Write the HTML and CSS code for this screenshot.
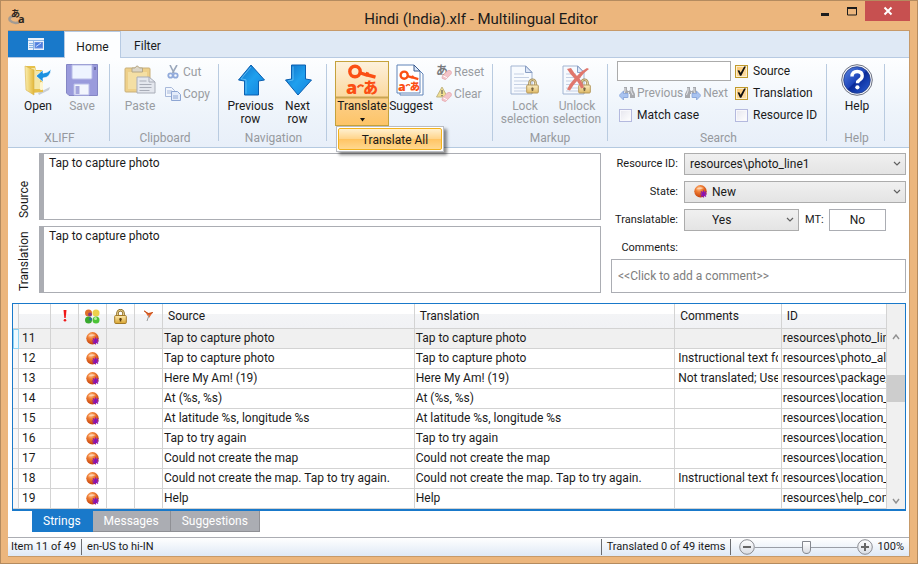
FILE: index.html
```html
<!DOCTYPE html>
<html lang="en">
<head>
<meta charset="utf-8">
<title>Hindi (India).xlf - Multilingual Editor</title>
<link rel="stylesheet" href="styles.css">
</head>
<body>
<svg class="defs" aria-hidden="true">
  <defs>
    <radialGradient id="ballFill" cx="38%" cy="28%" r="70%"><stop offset="0" stop-color="#ffc08a"/><stop offset=".4" stop-color="#ef7d33"/><stop offset="1" stop-color="#c5430c"/></radialGradient>
    <linearGradient id="arrowFill" x1="0" y1="0" x2="1" y2="1"><stop offset="0" stop-color="#0d6fc6"/><stop offset=".5" stop-color="#1fa0ee"/><stop offset="1" stop-color="#1583dc"/></linearGradient>
    <linearGradient id="folderFill" x1="0" y1="0" x2="1" y2="0"><stop offset="0" stop-color="#fbefb0"/><stop offset="1" stop-color="#e3b83a"/></linearGradient>
    <linearGradient id="lockFill" x1="0" y1="0" x2="0" y2="1"><stop offset="0" stop-color="#fdeab0"/><stop offset="1" stop-color="#d9a531"/></linearGradient>
    <linearGradient id="helpFill" x1="0" y1="0" x2="1" y2="1"><stop offset="0" stop-color="#5b86e0"/><stop offset=".48" stop-color="#1d45bb"/><stop offset=".52" stop-color="#0a2a98"/><stop offset="1" stop-color="#2b62d8"/></linearGradient>
    <linearGradient id="zoomFill" x1="0" y1="0" x2="0" y2="1"><stop offset="0" stop-color="#fff"/><stop offset="1" stop-color="#d9dde4"/></linearGradient>
    <symbol id="ball" viewBox="0 0 14 14">
      <circle cx="6.5" cy="6.3" r="6.2" fill="url(#ballFill)"/>
      <path d="M2 4.2Q5 1 10 3Q7 4.500 2 4.200Z" fill="#ffe0c4" opacity=".7"/>
      <path d="M9.500 5.500v7M6 9h7M7 6.500l5 5M12 6.500l-5 5" stroke="#8a12b4" stroke-width="1.200"/>
    </symbol>
    <symbol id="chevron" viewBox="0 0 8 6"><path d="M1 1l3 3 3-3" fill="none" stroke="#606060" stroke-width="1.200"/></symbol>
    <symbol id="padlock" viewBox="0 0 13 15">
      <path d="M3.500 7V4.200a3 3 0 0 1 6 0V7" fill="none" stroke="#8a6a22" stroke-width="2.600"/>
      <path d="M3.500 7V4.200a3 3 0 0 1 6 0V7" fill="none" stroke="#e9d18d" stroke-width="1"/>
      <rect x=".7" y="6.500" width="11.600" height="8" rx="1" fill="url(#lockFill)" stroke="#a27a28"/>
      <path d="M6.500 9v3.500M5.300 10.300h2.400" stroke="#5d3e0c" stroke-width="1.500"/>
    </symbol>
    <symbol id="page" viewBox="0 0 24 30">
      <path d="M1 1h15l6 6v22H1z" fill="#f7faff" stroke="#8ea4c8"/>
      <path d="M15.500 1v6.500H22z" fill="#d5e2f8" stroke="#6f88b5"/>
      <path d="M4 9h10M4 12.500h15M4 16h15M4 19.500h15M4 23h12M4 26h12" stroke="#b9c6de"/>
    </symbol>
    <symbol id="translateMark" viewBox="0 0 32 32">
      <circle cx="9" cy="7.500" r="5.200" fill="none" stroke="#fb4f14" stroke-width="3.400"/>
      <path d="M13 8.500l8 2.600M20 10.500l9.500 2.700" fill="none" stroke="#fb4f14" stroke-width="3.400"/>
      <path d="M20.500 12l1.200-3.800" fill="none" stroke="#fb4f14" stroke-width="3"/>
      <text x="0" y="30" font-size="18" font-weight="800" fill="#fb4f14">a</text>
      <path d="M11.500 23.500q3-4 6-1" fill="none" stroke="#fb4f14" stroke-width="2"/>
      <text x="17" y="29" font-size="15" font-weight="900" fill="#fb4f14">あ</text>
    </symbol>
    <symbol id="binoculars" viewBox="0 0 13 12">
      <path d="M2 1h3v3l1 1h1l1-1V1h3v3l2 4v4H8V8H5v4H0V8l2-4z" fill="#a7a9ae"/>
      <path d="M3 2v3L1.500 9M9 2v3l2 4M6.500 6v2" stroke="#e6e7ea" fill="none"/>
    </symbol>
    <symbol id="heart" viewBox="0 0 12 11"><path d="M1.500 6.500L6.800 1.200a2.500 2.500 0 0 1 4 3.500L4.800 10.700 1 9z" fill="#f3c4c9" stroke="#e2a0a8" stroke-width=".7"/><path d="M2.500 6.500l4 2" stroke="#fff"/></symbol>
  </defs>
</svg>

<div class="window">
  <header class="titlebar">
    <svg class="app-icon" width="18" height="18" viewBox="0 0 18 18" aria-hidden="true">
      <path d="M6 8Q0 9 2 12.500q3 3.500 9 2" fill="none" stroke="#a39b93" stroke-width="2.600"/>
      <text x="3" y="9" font-size="9" font-weight="700" fill="#2c2520">あ</text>
      <text x="10" y="15" font-size="11" font-weight="700" fill="#2c2520">a</text>
    </svg>
    <h1 class="title">Hindi (India).xlf - Multilingual Editor</h1>
    <div class="window-buttons">
      <button class="win-btn" aria-label="Minimize"><svg width="10" height="10"><path d="M1 8.500h8" stroke="#1d1d1d" stroke-width="3"/></svg></button>
      <button class="win-btn" aria-label="Maximize"><svg width="10" height="10"><path d="M.5 2v7h9V2z" fill="none" stroke="#1d1d1d"/><path d="M0 2h10" stroke="#1d1d1d" stroke-width="2"/></svg></button>
      <button class="win-btn close" aria-label="Close"><svg width="10" height="10"><path d="M1.500 1.500l7 7M8.500 1.500l-7 7" stroke="#fff" stroke-width="2"/></svg></button>
    </div>
  </header>

  <div class="client">
    <nav class="tabs">
      <button class="file-tab" aria-label="File menu">
        <svg width="16" height="12" viewBox="0 0 16 12"><rect width="16" height="12" fill="#e9f1fc"/><path d="M0 2.500h16M1 5.500h4M1 7.500h4M1 9.500h4M5.500 3v9" stroke="#8db5e4"/><rect x="7" y="4.500" width="7.500" height="5.500" fill="#4f7fe0" stroke="#6f93e0"/><path d="M8 8.500L13 5" stroke="#cfe0ff"/></svg>
      </button>
      <button class="tab active">Home</button>
      <button class="tab">Filter</button>
    </nav>

    <div class="ribbon">
      <section class="group g-xliff">
        <div class="items">
          <button class="big">
            <svg width="32" height="32" viewBox="0 0 32 32"><path d="M16 29l12-6-1 3-10 5z" fill="#aeb4bc" opacity=".6"/><path d="M4 2h9l1 4h7v22l-12 1z" fill="#e6c04a"/><path d="M9 4h4l1 3h4v18H9z" fill="#f4e6a4"/><path d="M3 2l9 4v25l-8-5z" fill="url(#folderFill)" stroke="#d7b24b" stroke-width=".6"/><rect x="18" y="18" width="3" height="8" rx="1" fill="#fff6cf"/><path d="M14 12l7-6v3.200q5-.2 8-4.200-.5 8.500-8 9v4z" fill="#1b91e0" stroke="#fff" stroke-width=".6"/></svg>
            <span>Open</span>
          </button>
          <button class="big" disabled>
            <svg width="32" height="32" viewBox="0 0 32 32"><path d="M1 .5h30.500v31H3L.5 29V.5z" fill="#9a9bdc" stroke="#8486c4"/><path d="M6 1h20v13q0 1-1 1H7q-1 0-1-1z" fill="#eef4ff" stroke="#b8bce8"/><path d="M8 31V20h15v11z" fill="#f3f6fd" stroke="#b8bce8"/><rect x="9.500" y="22" width="4" height="8" fill="#a4a5dc"/><rect x="28" y="3" width="2" height="3" fill="#6c6ea8"/></svg>
            <span>Save</span>
          </button>
        </div>
        <h2>XLIFF</h2>
      </section>

      <section class="group g-clipboard">
        <div class="items">
          <button class="big" disabled>
            <svg width="32" height="32" viewBox="0 0 32 32"><rect x="1" y="4" width="25" height="24" rx="1" fill="#eed08a" stroke="#c9b07a"/><path d="M4 8h19v17H4z" fill="#f4dfa4"/><path d="M8 8V4h3q2-4 4.500 0h3v4z" fill="#dcd6c8" stroke="#b5a888"/><path d="M13 13h12l6 5v11H13z" fill="#e4e7ee" stroke="#a9adb8"/><path d="M25 13v5h6M15.500 17h7M15.500 20.500h12M15.500 23.500h12M15.500 26.500h10" stroke="#a9adb8" fill="none"/></svg>
            <span>Paste</span>
          </button>
          <div class="stack">
            <button class="small" disabled><svg width="16" height="14" viewBox="0 0 16 14"><path d="M5 0l4 8M12 0L7.500 8" stroke="#9aa7bb" stroke-width="1.600"/><circle cx="5.500" cy="10.500" r="2.200" fill="none" stroke="#91aadb" stroke-width="1.800"/><circle cx="10.500" cy="10.500" r="2.200" fill="none" stroke="#91aadb" stroke-width="1.800"/></svg><span>Cut</span></button>
            <button class="small" disabled><svg width="16" height="14" viewBox="0 0 16 14"><path d="M.5.5h6l3 3v6h-9z" fill="#f2f6fd" stroke="#a8b9da"/><path d="M2 4h5M2 6h4" stroke="#a8b9da"/><path d="M6.500 4.500h6l3 3v6h-9z" fill="#e4ecfa" stroke="#8ea6d3"/><path d="M8 9h5M8 11h5" stroke="#8ea6d3"/></svg><span>Copy</span></button>
          </div>
        </div>
        <h2>Clipboard</h2>
      </section>

      <section class="group g-navigation">
        <div class="items">
          <button class="big"><svg width="32" height="32" viewBox="0 0 32 32"><path d="M16 1L29.500 16l-6 1v14h-14V17l-6-1z" fill="url(#arrowFill)" stroke="#0b5fb0"/><path d="M16 3L6 14.800l5 1V29.500" fill="none" stroke="#6bc3f7" opacity=".8"/></svg><span>Previous<br>row</span></button>
          <button class="big"><svg width="32" height="32" viewBox="0 0 32 32"><path d="M16 31L29.500 16l-6-1V1h-14v14l-6 1z" fill="url(#arrowFill)" stroke="#0b5fb0"/><path d="M11 2.500V16l-5 1" fill="none" stroke="#6bc3f7" opacity=".8"/></svg><span>Next<br>row</span></button>
        </div>
        <h2>Navigation</h2>
      </section>

      <section class="group g-translate">
        <div class="items">
          <div class="split">
            <button class="big open" aria-haspopup="menu" aria-expanded="true">
              <svg width="32" height="32"><use href="#translateMark"/></svg>
              <span>Translate</span>
              <svg class="caret" width="5" height="4" viewBox="0 0 5 4"><path d="M0 0h5L2.500 3.500z" fill="#111"/></svg>
            </button>
            <div class="menu" role="menu"><button role="menuitem">Translate All</button></div>
          </div>
          <button class="big"><svg width="32" height="32" viewBox="0 0 32 32"><path d="M5 3h16l7 7v21H5z" fill="#fff" stroke="#5f83b8"/><path d="M2 1h17l6 6v22H2z" fill="#fff" stroke="#5f83b8"/><path d="M19 1v6h6z" fill="#dce9fb" stroke="#3b5b8c"/><svg x="3" y="6" width="22" height="22"><use href="#translateMark"/></svg></svg><span>Suggest</span></button>
          <div class="stack">
            <button class="small" disabled><svg width="16" height="16" viewBox="0 0 16 16"><text x="0" y="11" font-size="12" font-weight="700" fill="#77797d">あ</text><svg x="5" y="6" width="11" height="10"><use href="#heart"/></svg></svg><span>Reset</span></button>
            <button class="small" disabled><svg width="16" height="16" viewBox="0 0 16 16"><path d="M6 1l5.500 10H.5z" fill="#f0df91" stroke="#c2b684"/><path d="M6 4v4M6 9v1.300" stroke="#6b6a60" stroke-width="1.300"/><svg x="5" y="6" width="11" height="10"><use href="#heart"/></svg></svg><span>Clear</span></button>
          </div>
        </div>
      </section>

      <section class="group g-markup">
        <div class="items">
          <button class="big" disabled><svg width="32" height="32" viewBox="0 0 32 32"><svg x="1" y="1" width="24" height="30" opacity=".8"><use href="#page"/></svg><svg x="17" y="14" width="13" height="16" opacity=".75"><use href="#padlock"/></svg></svg><span>Lock<br>selection</span></button>
          <button class="big" disabled><svg width="32" height="32" viewBox="0 0 32 32"><svg x="1" y="1" width="24" height="30" opacity=".8"><use href="#page"/></svg><svg x="17" y="14" width="13" height="16" opacity=".75"><use href="#padlock"/></svg><path d="M6 5l4-1q3 5 6 8 4-5 10-8l2 1q-6 4-9.500 9.500 3 4 4.500 9l-3 1q-1.500-4-4-7.500-4 4-7 9.500l-3-1q3-6.500 7.500-11Q9 10 6 5z" fill="#e0766c"/></svg><span>Unlock<br>selection</span></button>
        </div>
        <h2>Markup</h2>
      </section>

      <section class="group g-search">
        <div class="search">
          <input class="search-box" type="text" aria-label="Search text">
          <label class="check"><input type="checkbox" checked><span>Source</span></label>
          <div class="find">
            <button class="small" disabled><svg width="16" height="14" viewBox="0 0 16 14"><svg x="3" y="0" width="13" height="12"><use href="#binoculars"/></svg><path d="M0 9.500L4.500 5v2.500H9v4H4.500V14z" fill="#a9c3f0" stroke="#87a5dc" stroke-width=".8"/></svg><span>Previous</span></button>
            <button class="small" disabled><svg width="16" height="14" viewBox="0 0 16 14"><svg x="0" y="0" width="13" height="12"><use href="#binoculars"/></svg><path d="M16 9.500L11.500 5v2.500H7v4h4.500V14z" fill="#a9c3f0" stroke="#87a5dc" stroke-width=".8"/></svg><span>Next</span></button>
          </div>
          <label class="check"><input type="checkbox" checked><span>Translation</span></label>
          <label class="check match"><input type="checkbox"><span>Match case</span></label>
          <label class="check"><input type="checkbox"><span>Resource ID</span></label>
        </div>
        <h2>Search</h2>
      </section>

      <section class="group g-help">
        <div class="items">
          <button class="big"><svg width="32" height="32" viewBox="0 0 32 32"><circle cx="16" cy="16" r="15.300" fill="#f4f6fa" stroke="#6b7080"/><circle cx="16" cy="16" r="13.300" fill="url(#helpFill)" stroke="#253e86" stroke-width=".8"/><path d="M11 12.500q0-5 5.200-5 5 0 5 4.300 0 2.700-2.700 4.200-2 1.200-2 3.200" fill="none" stroke="#fff" stroke-width="3.400"/><circle cx="16.400" cy="23.300" r="2.100" fill="#fff"/></svg><span>Help</span></button>
        </div>
        <h2>Help</h2>
      </section>
    </div>

    <main class="content">
      <div class="editor">
        <div class="texts">
          <label class="side" for="src">Source</label>
          <textarea id="src" readonly>Tap to capture photo</textarea>
          <label class="side" for="trg">Translation</label>
          <textarea id="trg">Tap to capture photo</textarea>
        </div>
        <form class="props">
          <label for="rid">Resource ID:</label>
          <div class="pick wide"><select id="rid"><option>resources\photo_line1</option></select><svg class="arrow" width="8" height="6"><use href="#chevron"/></svg></div>
          <label for="state">State:</label>
          <div class="pick wide state"><select id="state"><option>New</option></select><svg class="dot" width="14" height="14"><use href="#ball"/></svg><svg class="arrow" width="8" height="6"><use href="#chevron"/></svg></div>
          <label for="trn">Translatable:</label>
          <div class="pick yes"><select id="trn"><option>Yes</option></select><svg class="arrow" width="8" height="6"><use href="#chevron"/></svg></div>
          <label for="mt">MT:</label>
          <input id="mt" class="mt-value" type="text" value="No" readonly>
          <label class="comment-label" for="cmt">Comments:</label>
          <input id="cmt" class="comment" type="text" placeholder="&lt;&lt;Click to add a comment&gt;&gt;">
        </form>
      </div>

      <div class="grid">
        <div class="grid-body">
          <table>
            <colgroup><col class="c-head"><col class="c-num"><col class="c-ico"><col class="c-ico"><col class="c-ico"><col class="c-ico"><col class="c-src"><col class="c-trn"><col class="c-cmt"><col></colgroup>
            <thead>
              <tr>
                <th class="rh"></th><th></th>
                <th class="ico"><svg width="6" height="14" viewBox="0 0 6 14"><path d="M1.500 1h3L3.700 9H2.300z" fill="#f01818"/><circle cx="3" cy="11.300" r="1.300" fill="#f01818"/></svg></th>
                <th class="ico"><svg width="15" height="15" viewBox="0 0 15 15"><circle cx="3.500" cy="4" r="3.500" fill="#e0702c"/><circle cx="5" cy="5.500" r="2" fill="#8a3a80"/><circle cx="11" cy="4" r="3.500" fill="#eed04c"/><circle cx="3.500" cy="11" r="3.500" fill="#38a92e"/><circle cx="11" cy="11" r="3.500" fill="#4cc436"/><circle cx="5.500" cy="10" r="1.500" fill="#2d6c9a"/><circle cx="10.500" cy="9.500" r="1.500" fill="#b8ec9a"/></svg></th>
                <th class="ico"><svg width="13" height="15"><use href="#padlock"/></svg></th>
                <th class="ico"><svg width="11" height="12" viewBox="0 0 11 12"><path d="M1 0l4 3 5-1-4 6z" fill="#e8672c"/><path d="M1 1l5 3 4-1.500" fill="none" stroke="#c2501c"/><path d="M6 5L4 11" stroke="#999"/></svg></th>
                <th>Source</th><th>Translation</th><th>Comments</th><th>ID</th>
              </tr>
            </thead>
            <tbody>
              <tr class="selected"><td class="rh"></td><td class="num">11</td><td></td><td class="ico"><svg width="14" height="14"><use href="#ball"/></svg></td><td></td><td></td><td>Tap to capture photo</td><td>Tap to capture photo</td><td class="cmt"></td><td>resources\photo_line1</td></tr>
              <tr><td class="rh"></td><td class="num">12</td><td></td><td class="ico"><svg width="14" height="14"><use href="#ball"/></svg></td><td></td><td></td><td>Tap to capture photo</td><td>Tap to capture photo</td><td class="cmt"><div>Instructional text for</div></td><td>resources\photo_alt</td></tr>
              <tr><td class="rh"></td><td class="num">13</td><td></td><td class="ico"><svg width="14" height="14"><use href="#ball"/></svg></td><td></td><td></td><td>Here My Am! (19)</td><td>Here My Am! (19)</td><td class="cmt"><div>Not translated; Used</div></td><td>resources\package_</td></tr>
              <tr><td class="rh"></td><td class="num">14</td><td></td><td class="ico"><svg width="14" height="14"><use href="#ball"/></svg></td><td></td><td></td><td>At (%s, %s)</td><td>At (%s, %s)</td><td class="cmt"></td><td>resources\location_t</td></tr>
              <tr><td class="rh"></td><td class="num">15</td><td></td><td class="ico"><svg width="14" height="14"><use href="#ball"/></svg></td><td></td><td></td><td>At latitude %s, longitude %s</td><td>At latitude %s, longitude %s</td><td class="cmt"></td><td>resources\location_t</td></tr>
              <tr><td class="rh"></td><td class="num">16</td><td></td><td class="ico"><svg width="14" height="14"><use href="#ball"/></svg></td><td></td><td></td><td>Tap to try again</td><td>Tap to try again</td><td class="cmt"></td><td>resources\location_e</td></tr>
              <tr><td class="rh"></td><td class="num">17</td><td></td><td class="ico"><svg width="14" height="14"><use href="#ball"/></svg></td><td></td><td></td><td>Could not create the map</td><td>Could not create the map</td><td class="cmt"></td><td>resources\location_e</td></tr>
              <tr><td class="rh"></td><td class="num">18</td><td></td><td class="ico"><svg width="14" height="14"><use href="#ball"/></svg></td><td></td><td></td><td>Could not create the map. Tap to try again.</td><td>Could not create the map. Tap to try again.</td><td class="cmt"><div>Instructional text for</div></td><td>resources\location_e</td></tr>
              <tr><td class="rh"></td><td class="num">19</td><td></td><td class="ico"><svg width="14" height="14"><use href="#ball"/></svg></td><td></td><td></td><td>Help</td><td>Help</td><td class="cmt"></td><td>resources\help_com</td></tr>
            </tbody>
          </table>
        </div>
        <div class="scrollbar" aria-hidden="true">
          <svg width="8" height="6" viewBox="0 0 8 6"><path d="M1 5l3-4 3 4" fill="none" stroke="#909090" stroke-width="1.400"/></svg>
          <div class="thumb"></div>
          <svg width="8" height="6" viewBox="0 0 8 6"><path d="M1 1l3 4 3-4" fill="none" stroke="#909090" stroke-width="1.400"/></svg>
        </div>
      </div>

      <div class="sheets">
        <button class="sheet active">Strings</button>
        <button class="sheet">Messages</button>
        <button class="sheet">Suggestions</button>
      </div>
    </main>

    <footer class="status">
      <span class="cell first">Item 11 of 49</span>
      <span class="cell">en-US to hi-IN</span>
      <span class="cell count">Translated 0 of 49 items</span>
      <div class="zoom">
        <button aria-label="Zoom out"><svg width="16" height="16" viewBox="0 0 16 16"><circle cx="8" cy="8" r="7.300" fill="url(#zoomFill)" stroke="#8a8c92"/><path d="M4 8h8" stroke="#666" stroke-width="2"/></svg></button>
        <input type="range" min="0" max="100" value="50" aria-label="Zoom">
        <button aria-label="Zoom in"><svg width="16" height="16" viewBox="0 0 16 16"><circle cx="8" cy="8" r="7.300" fill="url(#zoomFill)" stroke="#8a8c92"/><path d="M4 8h8M8 4v8" stroke="#666" stroke-width="2"/></svg></button>
        <span>100%</span>
      </div>
    </footer>
  </div>
</div>
</body>
</html>
```
FILE: styles.css
```css
* { box-sizing: border-box; }

body {
  margin: 0;
  font: 12px/16px Roboto, "Noto Sans CJK JP", sans-serif;
  color: #1a1a1a;
}

button, input, select, textarea { font: inherit; color: inherit; margin: 0; }
button { padding: 0; border: 0; background: none; }
svg { display: block; flex: none; }
svg text { font-family: "Open Sans", "Noto Sans CJK JP", sans-serif; }
.defs { position: absolute; width: 0; height: 0; }

.window {
  display: flex;
  flex-direction: column;
  height: 100vh;
  padding: 0 7px 6px;
  border: 1px solid #b48b5f;
  background: #ecb67d;
}

/* Title bar */
.titlebar {
  display: grid;
  grid-template-columns: 156px 1fr 112px;
  height: 29px;
}
.app-icon { margin-top: 7px; }
.title {
  margin: 0;
  font-size: 15px;
  font-weight: 400;
  line-height: 36px;
  text-align: center;
  white-space: nowrap;
}
.window-buttons { display: flex; justify-content: flex-end; }
.win-btn { display: grid; place-items: center; width: 27px; height: 20px; }
.win-btn.close { width: 45px; background: #c75050; }

.client {
  display: flex;
  flex: 1;
  flex-direction: column;
  min-height: 0;
  border: 1px solid #c79a69;
  border-left: 0;
  background: #fff;
}

/* Ribbon tabs */
.tabs { display: flex; height: 26px; background: #dfe9f5; }
.file-tab { display: grid; place-items: center; width: 56px; background: #1979ca; }
.tab { width: 53px; padding-top: 4px; }
.tab.active {
  width: 57px;
  margin-bottom: -1px;
  border: 1px solid #b7cae2;
  border-bottom: 0;
  background: #fdfeff;
  z-index: 1;
}

/* Ribbon */
.ribbon {
  display: flex;
  height: 91px;
  padding: 6px 0;
  border-top: 1px solid #b7cae2;
  border-bottom: 1px solid #b4c9e0;
  background: linear-gradient(#fdfeff, #eef4fb 60%, #e8eff9);
}
.group {
  display: flex;
  flex-direction: column;
  justify-content: space-between;
  padding-left: 8px;
  border-right: 1px solid #b9cbe0;
}
.group h2 {
  margin: 0 0 -5px -6px;
  font-size: 12px;
  font-weight: 400;
  line-height: 16px;
  text-align: center;
  color: #96999e;
}
.g-xliff { width: 102px; }
.g-clipboard { width: 109px; }
.g-navigation { width: 108px; }
.g-translate { width: 166px; }
.g-markup { width: 115px; padding-left: 6px; }
.g-search { width: 219px; padding-left: 9px; }
.g-help { width: 58px; }

.items { display: flex; }
.big {
  display: flex;
  flex-direction: column;
  align-items: center;
  width: 44px;
  line-height: 13px;
  white-space: nowrap;
}
.big span { margin-top: 4px; }
.g-navigation .big { width: 47px; }
.g-markup .big { width: 52px; }
.big:disabled, .small:disabled { color: #999ca1; }
.stack { display: flex; flex-direction: column; gap: 6px; padding-left: 3px; }
.small { display: flex; align-items: center; gap: 2px; height: 16px; }

.split { position: relative; margin-top: -3px; }
.big.open {
  width: 54px;
  height: 65px;
  padding-top: 2px;
  border: 1px solid #c5a23c;
  background: linear-gradient(#fdf1dc, #fbd9a0 34px, #c9a452 35px, #c9a452 36px, #fcd08b 37px, #fdc468);
}
.big.open .caret { margin-top: 5px; }
.menu {
  position: absolute;
  z-index: 5;
  top: 65px;
  left: 1px;
  width: 108px;
  padding: 1px;
  border: 1px solid #b9bcc2;
  background: #fff;
  box-shadow: 3px 3px 3px rgba(0, 0, 0, .45);
}
.menu button {
  width: 100%;
  height: 22px;
  padding: 2px 0 0 10px;
  border: 1px solid #f2b21c;
  border-radius: 2px;
  background: linear-gradient(#fff0cf, #ffd48a 50%, #ffc464 51%, #ffd890);
}

.search {
  display: grid;
  grid-template-columns: 114px 1fr;
  column-gap: 4px;
  row-gap: 2px;
  margin-top: -3px;
}
.search-box { height: 20px; padding: 0 3px; border: 1px solid #ababab; background: #fff; }
.check { display: flex; align-items: center; gap: 5px; height: 20px; white-space: nowrap; }
.match { padding-left: 2px; }
.check input {
  position: relative;
  appearance: none;
  flex: none;
  width: 13px;
  height: 13px;
  border: 1px solid #b4b9de;
  background: linear-gradient(135deg, #e6e6ee, #fff);
  box-shadow: inset 0 0 0 1px #f8f8fc;
}
.check input:checked {
  border-color: #c09a2c;
  background: linear-gradient(135deg, #fbc56c, #fee2ae);
  box-shadow: inset 0 0 0 1px #fdf0cf;
}
.check input:checked::after {
  content: "";
  position: absolute;
  inset: 0;
  background: #111;
  clip-path: polygon(14% 46%, 30% 44%, 42% 66%, 74% 8%, 90% 8%, 48% 94%, 36% 94%);
}
.find { display: flex; align-items: center; justify-content: space-between; padding: 0 3px 0 2px; }

/* Editor */
.content { flex: 1; min-height: 0; padding: 5px 3px 0 4px; }
.editor { display: grid; grid-template-columns: 1fr 295px; gap: 10px; }
.texts { display: grid; grid-template-columns: 25px 1fr; grid-auto-rows: 67px; gap: 6px 2px; }
.side {
  padding-top: 2px;
  writing-mode: vertical-rl;
  transform: rotate(180deg);
  line-height: 25px;
}
.texts textarea {
  width: 100%;
  height: 100%;
  padding: 1px 5px;
  border: 1px solid #abadb3;
  border-left-width: 5px;
  outline: 0;
  resize: none;
}
.props {
  display: grid;
  grid-template-columns: 67px 115px 18px 57px 1fr;
  grid-template-rows: 22px 22px 22px 16px 34px;
  gap: 6px;
  align-items: center;
}
.props label { font-size: 11px; text-align: right; white-space: nowrap; }
.props .comment-label { grid-column: 1; align-self: start; line-height: 22px; }
.pick { position: relative; height: 22px; }
.pick.wide { grid-column: 2 / -1; }
.pick select {
  appearance: none;
  width: 100%;
  height: 100%;
  padding: 0 5px;
  border: 1px solid #acacac;
  border-radius: 0;
  background: linear-gradient(#f0f0f0, #e4e4e4);
}
.pick.state select, .pick.yes select { padding-left: 27px; }
.arrow { position: absolute; top: 8px; right: 5px; pointer-events: none; }
.dot { position: absolute; top: 4px; left: 10px; pointer-events: none; }
.mt-value { width: 100%; height: 22px; padding: 0; border: 1px solid #abadb3; text-align: center; }
.comment {
  grid-column: 1 / -1;
  height: 34px;
  padding: 0 6px;
  border: 1px solid #abadb3;
}
.comment::placeholder { color: #7d7d7d; opacity: 1; }

/* String table */
.grid {
  display: flex;
  margin-top: 10px;
  border: 1px solid #1979ca;
  border-bottom-width: 2px;
  background: #f0f0f0;
}
.grid-body { flex: 1; min-width: 0; }
table { width: 100%; table-layout: fixed; border-collapse: separate; border-spacing: 0; background: #fff; }
.c-head { width: 6px; }
.c-num { width: 32px; }
.c-ico { width: 28px; }
.c-src { width: 28.8%; }
.c-trn { width: 29.8%; }
.c-cmt { width: 12.2%; }
th, td {
  overflow: hidden;
  padding: 0 1px;
  border-right: 1px solid #d3d3d3;
  border-bottom: 1px solid #d3d3d3;
  text-align: left;
  font-weight: 400;
  white-space: nowrap;
}
th { height: 25px; padding-left: 5px; background: linear-gradient(#fff 40%, #f3f4f6 42%, #f1f2f5); }
td { height: 20px; line-height: 19px; }
.rh { padding: 0; background: #f7f7f8; }
.num { padding-left: 3px; }
.ico { padding: 0; }
.ico svg { margin: 0 auto; }
.cmt { padding: 0 3px; }
.cmt div { overflow: hidden; }
.selected td { background: #f0f0f0; }
.selected .rh { border: 1px solid #8fd4f2; background: #eefaff; }
.scrollbar {
  display: flex;
  flex-direction: column;
  align-items: center;
  width: 18px;
  padding: 30px 0 5px;
}
.thumb { width: 100%; height: 27px; margin: 35px 0 auto; background: #cdcdcd; }

/* Sheet tabs */
.sheets { display: flex; padding-left: 20px; }
.sheet {
  height: 21px;
  padding: 0 11px;
  border: 1px solid #8f9095;
  border-width: 0 1px 1px 0;
  background: #abadb3;
  color: #fff;
}
.sheet.active { border-color: #1979ca; background: #1979ca; }

/* Status bar */
.status {
  display: flex;
  align-items: center;
  height: 19px;
  padding: 0 5px 0 3px;
  border-top: 1px solid #abadb3;
  background: linear-gradient(#fff, #dfe9f6);
  font-size: 11px;
  white-space: nowrap;
}
.cell { padding: 0 5px; border-left: 1px solid #6a6c70; }
.cell.first { padding-left: 0; border-left: 0; }
.count { margin-left: auto; border-right: 1px solid #6a6c70; }
.zoom { display: flex; align-items: center; padding-left: 8px; }
.zoom input {
  appearance: none;
  width: 102px;
  height: 14px;
  margin: 0;
  background: linear-gradient(#9a9ea6, #9a9ea6) center / 100% 1px no-repeat;
}
.zoom input::-webkit-slider-thumb {
  appearance: none;
  width: 9px;
  height: 13px;
  background: linear-gradient(#fff, #dadde3);
  border: 1px solid #85888f;
  border-radius: 1px 1px 5px 5px;
}
.zoom span { padding-left: 4px; }
```
